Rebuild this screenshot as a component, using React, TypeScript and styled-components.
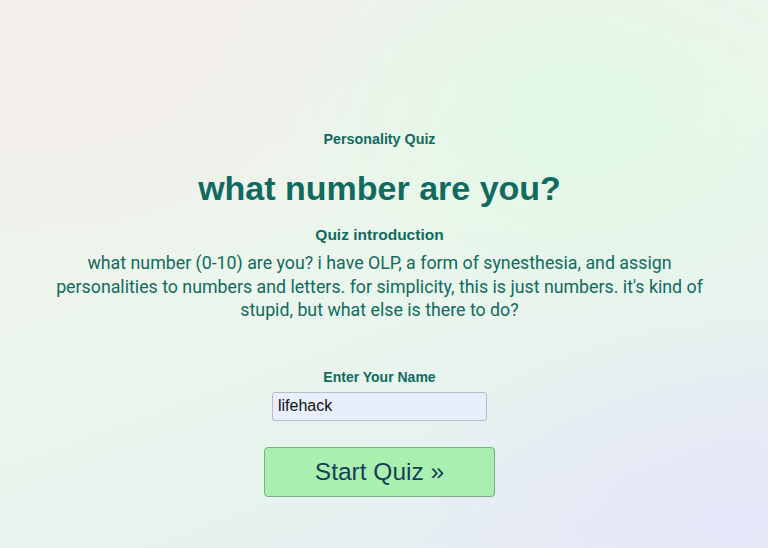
import styled, { createGlobalStyle } from 'styled-components';

const GlobalStyle = createGlobalStyle`
  html, body {
    margin: 0;
    padding: 0;
  }
  body {
    font-family: 'Liberation Sans', Arial, sans-serif;
  }
`;

const Page = styled.main`
  width: 768px;
  height: 548px;
  overflow: hidden;
  background:
    radial-gradient(ellipse 420px 300px at 75% 20%, rgba(222, 250, 228, 0.8), transparent 70%),
    radial-gradient(ellipse 400px 300px at 10% 10%, rgba(244, 236, 236, 0.9), transparent 70%),
    radial-gradient(ellipse 500px 300px at 95% 95%, rgba(228, 230, 248, 0.9), transparent 70%),
    linear-gradient(160deg, #f2efec 0%, #ecf6ec 45%, #e6f3ee 70%, #e8eaf6 100%);
  color: #106b5e;
`;

const Column = styled.section`
  width: 759px;
  padding-top: 130px;
  display: flex;
  flex-direction: column;
  align-items: center;
`;

const Kicker = styled.h3`
  margin: 0;
  font-size: 14.3px;
  font-weight: bold;
  line-height: 18px;
`;

const Title = styled.h1`
  margin: 21px 0 0;
  font-size: 34px;
  font-weight: bold;
  line-height: 38px;
`;

const SectionLabel = styled.h4`
  margin: 19px 0 0;
  font-size: 15.5px;
  font-weight: bold;
  line-height: 18px;
`;

const Intro = styled.p`
  margin: 7px 0 0;
  max-width: 660px;
  text-align: center;
  font-family: Roboto, 'Liberation Sans', sans-serif;
  font-size: 17.8px;
  line-height: 23.5px;
`;

const NameForm = styled.form`
  margin-top: 46px;
  display: flex;
  flex-direction: column;
  align-items: center;
`;

const Label = styled.label`
  font-size: 14px;
  font-weight: bold;
  line-height: 18px;
`;

const NameInput = styled.input`
  margin-top: 6px;
  width: 215px;
  height: 29px;
  box-sizing: border-box;
  padding: 0 5px;
  border: 1px solid #b8bcc4;
  border-radius: 3px;
  background: #e8eefc;
  font-family: 'Liberation Sans', Arial, sans-serif;
  font-size: 16px;
  color: #111;
`;

const StartButton = styled.button`
  margin-top: 26px;
  width: 231px;
  height: 50px;
  border: 1px solid #82ab8c;
  border-radius: 4px;
  background: #a9efb0;
  color: #153f57;
  font-family: 'Liberation Sans', Arial, sans-serif;
  font-size: 24.5px;
  cursor: pointer;
`;

export default function App() {
  return (
    <>
      <GlobalStyle />
      <Page>
        <Column>
          <Kicker>Personality Quiz</Kicker>
          <Title>what number are you?</Title>
          <SectionLabel>Quiz introduction</SectionLabel>
          <Intro>
            what number (0-10) are you? i have OLP, a form of synesthesia, and assign personalities
            to numbers and letters. for simplicity, this is just numbers. it's kind of stupid, but
            what else is there to do?
          </Intro>
          <NameForm onSubmit={(e) => e.preventDefault()}>
            <Label htmlFor="name">Enter Your Name</Label>
            <NameInput id="name" defaultValue="lifehack" />
            <StartButton type="submit">Start Quiz »</StartButton>
          </NameForm>
        </Column>
      </Page>
    </>
  );
}
